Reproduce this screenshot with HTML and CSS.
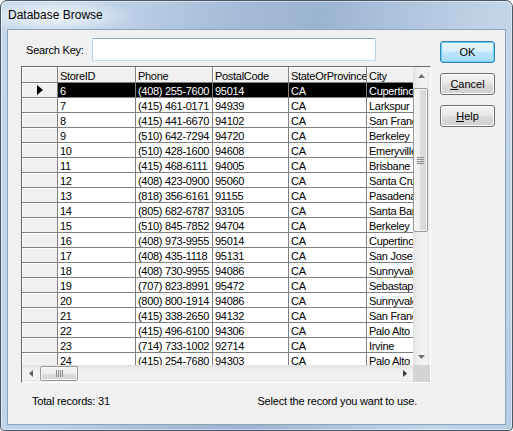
FILE: index.html
```html
<!DOCTYPE html>
<html>

<head>
    <meta charset="utf-8">
    <title>Database Browse</title>
    <link rel="stylesheet" href="styles.css">
</head>

<body>
    <div class="window">
        <div class="titlebar">Database Browse</div>

        <div class="client">
            <div class="main">
                <div class="search">
                    <label for="key">Search Key:</label>
                    <input type="text" id="key">
                </div>

                <div class="grid">
                    <div class="view">
                        <div class="row head">
                            <div class="ind"></div>
                            <div>StoreID</div>
                            <div>Phone</div>
                            <div>PostalCode</div>
                            <div>StateOrProvince</div>
                            <div>City</div>
                        </div>
                        <div class="row sel">
                            <div class="ind"><svg width="6" height="10" viewBox="0 0 6 10"><polygon points="0,0 6,5 0,10" fill="#000"/></svg></div>
                            <div>6</div><div>(408) 255-7600</div><div>95014</div><div>CA</div><div>Cupertino</div>
                        </div>
                        <div class="row"><div class="ind"></div><div>7</div><div>(415) 461-0171</div><div>94939</div><div>CA</div><div>Larkspur</div></div>
                        <div class="row"><div class="ind"></div><div>8</div><div>(415) 441-6670</div><div>94102</div><div>CA</div><div>San Francisco</div></div>
                        <div class="row"><div class="ind"></div><div>9</div><div>(510) 642-7294</div><div>94720</div><div>CA</div><div>Berkeley</div></div>
                        <div class="row"><div class="ind"></div><div>10</div><div>(510) 428-1600</div><div>94608</div><div>CA</div><div>Emeryville</div></div>
                        <div class="row"><div class="ind"></div><div>11</div><div>(415) 468-6111</div><div>94005</div><div>CA</div><div>Brisbane</div></div>
                        <div class="row"><div class="ind"></div><div>12</div><div>(408) 423-0900</div><div>95060</div><div>CA</div><div>Santa Cruz</div></div>
                        <div class="row"><div class="ind"></div><div>13</div><div>(818) 356-6161</div><div>91155</div><div>CA</div><div>Pasadena</div></div>
                        <div class="row"><div class="ind"></div><div>14</div><div>(805) 682-6787</div><div>93105</div><div>CA</div><div>Santa Barbara</div></div>
                        <div class="row"><div class="ind"></div><div>15</div><div>(510) 845-7852</div><div>94704</div><div>CA</div><div>Berkeley</div></div>
                        <div class="row"><div class="ind"></div><div>16</div><div>(408) 973-9955</div><div>95014</div><div>CA</div><div>Cupertino</div></div>
                        <div class="row"><div class="ind"></div><div>17</div><div>(408) 435-1118</div><div>95131</div><div>CA</div><div>San Jose</div></div>
                        <div class="row"><div class="ind"></div><div>18</div><div>(408) 730-9955</div><div>94086</div><div>CA</div><div>Sunnyvale</div></div>
                        <div class="row"><div class="ind"></div><div>19</div><div>(707) 823-8991</div><div>95472</div><div>CA</div><div>Sebastapol</div></div>
                        <div class="row"><div class="ind"></div><div>20</div><div>(800) 800-1914</div><div>94086</div><div>CA</div><div>Sunnyvale</div></div>
                        <div class="row"><div class="ind"></div><div>21</div><div>(415) 338-2650</div><div>94132</div><div>CA</div><div>San Francisco</div></div>
                        <div class="row"><div class="ind"></div><div>22</div><div>(415) 496-6100</div><div>94306</div><div>CA</div><div>Palo Alto</div></div>
                        <div class="row"><div class="ind"></div><div>23</div><div>(714) 733-1002</div><div>92714</div><div>CA</div><div>Irvine</div></div>
                        <div class="row"><div class="ind"></div><div>24</div><div>(415) 254-7680</div><div>94303</div><div>CA</div><div>Palo Alto</div></div>
                    </div>

                    <!-- vertical scrollbar -->
                    <div class="vscroll">
                        <div class="arrow"><svg width="7" height="4" viewBox="0 0 7 4"><polygon points="0,4 3.5,0 7,4" fill="#707070"/></svg></div>
                        <div class="track">
                            <div class="vthumb">
                                <svg width="7" height="7" viewBox="0 0 7 7">
                                    <path d="M0 0.5h7M0 2.5h7M0 4.5h7M0 6.5h7" stroke="#8a8a8a" stroke-width="1"/>
                                </svg>
                            </div>
                        </div>
                        <div class="arrow"><svg width="7" height="4" viewBox="0 0 7 4"><polygon points="0,0 7,0 3.5,4" fill="#707070"/></svg></div>
                    </div>

                    <!-- horizontal scrollbar -->
                    <div class="hscroll">
                        <div class="arrow"><svg width="4" height="7" viewBox="0 0 4 7"><polygon points="4,0 0,3.5 4,7" fill="#606060"/></svg></div>
                        <div class="track">
                            <div class="hthumb">
                                <svg width="7" height="7" viewBox="0 0 7 7">
                                    <path d="M0.5 0v7M2.5 0v7M4.5 0v7M6.5 0v7" stroke="#8a8a8a" stroke-width="1"/>
                                </svg>
                            </div>
                        </div>
                        <div class="arrow"><svg width="4" height="7" viewBox="0 0 4 7"><polygon points="0,0 4,3.5 0,7" fill="#404040"/></svg></div>
                    </div>
                    <div class="corner"></div>
                </div>

                <div class="status">
                    <span>Total records: 31</span>
                    <span>Select the record you want to use.</span>
                </div>
            </div>

            <div class="buttons">
                <button class="btn default">OK</button>
                <button class="btn"><u>C</u>ancel</button>
                <button class="btn"><u>H</u>elp</button>
            </div>
        </div>
    </div>
</body>

</html>
```

FILE: styles.css
```css
body {
    margin: 0;
    font-family: "Liberation Sans", Arial, sans-serif;
    font-size: 11px;
    color: #000;
}

/* window frame */
.window {
    width: 513px;
    height: 431px;
    box-sizing: border-box;
    border: 1px solid #4d5866;
    border-radius: 7px 7px 4px 4px;
    padding: 0 6px 5px 6px;
    display: flex;
    flex-direction: column;
    background:
        radial-gradient(80px 18px at 55px 15px, rgba(255, 255, 255, 0.8), rgba(255, 255, 255, 0)),
        linear-gradient(100deg, #c6d8eb 0%, #bdd1e7 20%, #a5bcd7 40%, #9bb4d1 55%, #b2c7df 72%, #c3d5e9 86%, #b7cce3 100%);
    box-shadow: inset 0 0 0 1px rgba(255, 255, 255, 0.45);
}

.titlebar {
    height: 28px;
    display: flex;
    align-items: center;
    padding-left: 1px;
    font-size: 12px;
}

.client {
    flex: 1;
    display: flex;
    background-color: #f0f0f0;
    border: 1px solid #8ea3ba;
    letter-spacing: -0.2px;
}

.main {
    width: 410px;
    padding: 8px 0 0 13px;
    display: flex;
    flex-direction: column;
}

/* search row */
.search {
    display: flex;
    align-items: center;
}

.search label {
    width: 66px;
    padding-left: 5px;
}

.search input {
    width: 284px;
    height: 23px;
    box-sizing: border-box;
    margin: 0;
    padding: 0 3px;
    border: 1px solid;
    border-color: #7ea5cb #b4cfe8 #c6ddf0 #b4cfe8;
    border-radius: 2px;
    background-color: #fff;
    font: inherit;
}

/* data grid */
.grid {
    margin-top: 5px;
    height: 317px;
    box-sizing: border-box;
    border: 1px solid;
    border-color: #696969 #fff #fff #696969;
    display: grid;
    grid-template-columns: 1fr 17px;
    grid-template-rows: 1fr 17px;
    background-color: #fff;
}

.view {
    overflow: hidden;
}

.row {
    display: grid;
    grid-template-columns: 36px 78px 77px 76px 78px 80px;
    height: 15px;
}

.row > div {
    box-sizing: border-box;
    border-right: 1px solid #808080;
    border-bottom: 1px solid #808080;
    padding-left: 2px;
    line-height: 16px;
    letter-spacing: -0.3px;
    overflow: hidden;
    white-space: nowrap;
}

.head {
    height: 16px;
}

.head > div {
    line-height: 18px;
    background-color: #f0f0f0;
    box-shadow: inset 1px 1px #fff;
}

.row > .ind {
    padding: 0;
    background-color: #f0f0f0;
    box-shadow: inset 1px 1px #fff;
    display: flex;
    align-items: center;
    justify-content: center;
}

.sel > div {
    background-color: #000;
    color: #fff;
}

/* scrollbars */
.vscroll {
    display: flex;
    flex-direction: column;
    background: linear-gradient(to right, #e2e2e2, #efefef 30%, #f3f3f3 70%, #ebebeb);
}

.hscroll {
    display: flex;
    background: linear-gradient(#e2e2e2, #efefef 30%, #f3f3f3 70%, #ebebeb);
}

.arrow {
    flex: none;
    height: 17px;
    display: flex;
    align-items: center;
    justify-content: center;
}

.hscroll .arrow {
    width: 17px;
    height: auto;
}

.track {
    flex: 1;
    display: flex;
}

.vscroll .track {
    flex-direction: column;
}

.vthumb,
.hthumb {
    box-sizing: border-box;
    border: 1px solid #979797;
    border-radius: 2px;
    display: flex;
    align-items: center;
    justify-content: center;
}

.vthumb {
    margin: 4px 2px 0 0;
    height: 144px;
    background: linear-gradient(to right, #f6f6f6, #ececec 50%, #dedede 50%, #d3d3d3);
    box-shadow: inset 0 0 0 1px #f9f9f9;
}

.hthumb {
    margin: 1px 0 1px 1px;
    width: 38px;
    background: linear-gradient(#f6f6f6, #ececec 50%, #dedede 50%, #d3d3d3);
    box-shadow: inset 0 0 0 1px #f9f9f9;
}

.corner {
    background-color: #d4d4d4;
}

.status {
    display: flex;
    justify-content: space-between;
    margin-top: 11px;
    padding: 0 14px 0 11px;
    line-height: 14px;
}

/* dialog buttons */
.buttons {
    display: flex;
    flex-direction: column;
    gap: 10px;
    padding-top: 11px;
    margin-left: 9px;
}

.btn {
    width: 55px;
    height: 22px;
    box-sizing: border-box;
    padding: 0;
    border: 1px solid #707070;
    border-radius: 3px;
    background: linear-gradient(#f2f2f2, #ebebeb 45%, #dddddd 50%, #cfcfcf);
    box-shadow: inset 0 0 0 1px #fcfcfc;
    font: inherit;
    color: #000;
}

.btn.default {
    border-color: #3c7fb1;
    background: linear-gradient(#eaf6fd, #d9f0fc 45%, #bee6fd 50%, #a7d9f5);
    box-shadow: inset 0 0 0 1px #5ed3f7;
}
```
